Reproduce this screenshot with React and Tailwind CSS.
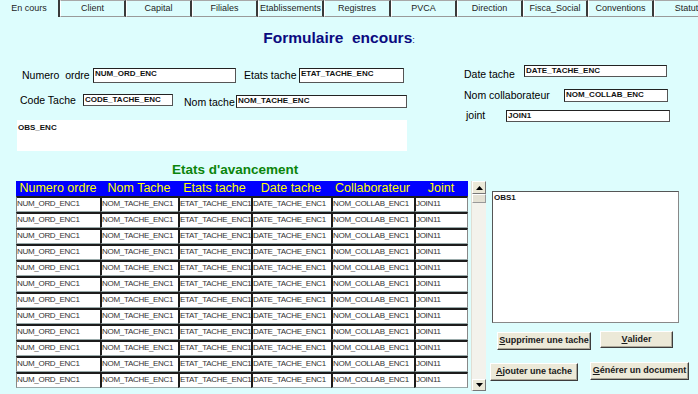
const tabs = [
  { label: 'En cours', w: 'w-[60px]', active: true },
  { label: 'Client', w: 'w-[66px]' },
  { label: 'Capital', w: 'w-[66px]' },
  { label: 'Filiales', w: 'w-[66px]' },
  { label: 'Etablissements', w: 'w-[66px]' },
  { label: 'Registres', w: 'w-[67px]' },
  { label: 'PVCA', w: 'w-[66px]' },
  { label: 'Direction', w: 'w-[66px]' },
  { label: 'Fisca_Social', w: 'w-[65px]' },
  { label: 'Conventions', w: 'w-[66px]' },
  { label: 'Statut', w: 'w-[66px]' },
]

const columns = [
  { title: 'Numero ordre', value: 'NUM_ORD_ENC1', w: 'w-[84px]' },
  { title: 'Nom Tache', value: 'NOM_TACHE_ENC1', w: 'w-[78px]' },
  { title: 'Etats tache', value: 'ETAT_TACHE_ENC1', w: 'w-[73px]' },
  { title: 'Date tache', value: 'DATE_TACHE_ENC1', w: 'w-[80px]' },
  { title: 'Collaborateur', value: 'NOM_COLLAB_ENC1', w: 'w-[83px]' },
  { title: 'Joint', value: 'JOIN11', w: 'w-[54px]' },
]

const rows = Array.from({ length: 12 }, (_, i) => i)

function Field({ value, className }) {
  return (
    <div className={`bg-white border border-t-[#222] border-l-[#222] border-b-[#555] border-r-[#555] pl-[1px] text-[8px] font-bold leading-[10px] text-[#111] overflow-hidden whitespace-nowrap ${className}`}>
      {value}
    </div>
  )
}

function Button({ children, className }) {
  return (
    <div className={`flex items-center justify-center bg-[#ece9d8] border border-t-white border-l-white border-b-[#3c3c3c] border-r-[#3c3c3c] shadow-[inset_-1px_-1px_0_#aca899] text-[9px] font-bold text-[#1a1a1a] whitespace-nowrap ${className}`}>
      {children}
    </div>
  )
}

function Arrow({ down }) {
  return (
    <svg width="7" height="4" viewBox="0 0 7 4">
      <polygon points={down ? '0,0 7,0 3.5,4' : '0,4 7,4 3.5,0'} fill="#000" />
    </svg>
  )
}

export default function App() {
  return (
    <div className="w-[698px] h-[394px] overflow-hidden bg-[#ddfdfd] font-['Liberation_Sans',Arial,sans-serif] text-black">
      {/* tabs */}
      <div className="flex h-[17px] overflow-hidden">
        {tabs.map((t) => (
          <div
            key={t.label}
            className={`${t.w} shrink-0 flex items-center justify-center text-[9px] text-[#1e1e1e] border-r-2 border-r-[#3a3a3a] ${
              t.active ? '' : 'border-t border-t-[#a8a8a8] border-b border-b-[#9a9a9a] border-l border-l-white'
            }`}
          >
            {t.label}
          </div>
        ))}
      </div>

      {/* title */}
      <div className="pt-[11px] pr-[20px] h-[31px] text-center text-[15.5px] leading-[20px] font-bold text-[#0a0a80]">
        Formulaire&nbsp; encours<span className="text-[9px] font-normal">:</span>
      </div>

      {/* form */}
      <div className="flex mt-[16px] h-[88px]">
        <div className="ml-[17px] w-[390px]">
          <div className="flex items-center mt-[4px] h-[15px] text-[10.5px]">
            <span className="ml-[5px] w-[71px]">Numero&nbsp; ordre</span>
            <Field value="NUM_ORD_ENC" className="w-[143px] h-[15px]" />
            <span className="ml-[8px] w-[55px]">Etats tache</span>
            <Field value="ETAT_TACHE_ENC" className="w-[105px] h-[15px]" />
          </div>
          <div className="flex items-start mt-[11px] h-[13px] text-[10.5px]">
            <span className="ml-[3px] w-[63px] leading-[12px]">Code Tache</span>
            <Field value="CODE_TACHE_ENC" className="w-[90px] h-[12px]" />
            <span className="ml-[11px] w-[52px] mt-[2px] leading-[12px]">Nom tache</span>
            <Field value="NOM_TACHE_ENC" className="w-[171px] h-[13px] mt-[1px]" />
          </div>
          <div className="mt-[13px] h-[31px] bg-white pl-[1px] pt-[3px] text-[8px] font-bold leading-[9px] text-[#111]">
            OBS_ENC
          </div>
        </div>
        <div className="ml-[57px] text-[10.5px]">
          <div className="flex items-start mt-[1px] h-[12px]">
            <span className="w-[60px] mt-[3px] leading-[12px]">Date tache</span>
            <Field value="DATE_TACHE_ENC" className="w-[143px] h-[12px]" />
          </div>
          <div className="flex items-center mt-[12px] h-[13px]">
            <span className="w-[100px]">Nom collaborateur</span>
            <Field value="NOM_COLLAB_ENC" className="w-[104px] h-[13px]" />
          </div>
          <div className="flex items-center mt-[8px] h-[12px]">
            <span className="ml-[2px] w-[40px]">joint</span>
            <Field value="JOIN1" className="w-[164px] h-[12px]" />
          </div>
        </div>
      </div>

      {/* table title */}
      <div className="mt-[9px] pl-[172px] h-[18px] text-[13.5px] leading-[18px] font-bold text-[#0b850b]">
        Etats d'avancement
      </div>

      {/* table + side */}
      <div className="flex mt-[2px]">
        <div className="ml-[16px] w-[452px]">
          <div className="flex h-[15px] bg-[#0000ff]">
            {columns.map((c) => (
              <div key={c.title} className={`${c.w} text-center text-[12.5px] leading-[15px] text-[#ffff00] whitespace-nowrap`}>
                {c.title}
              </div>
            ))}
          </div>
          {rows.map((r) => (
            <div key={r} className="flex h-[16px] bg-[#b8c4c4]">
              {columns.map((c, i) => (
                <div
                  key={c.title}
                  className={`${c.w} h-[16px] bg-white border-t-2 border-t-[#1c1c1c] border-b border-b-[#9aa] ${
                    i === 0 ? 'border-l border-l-[#888]' : 'border-l-2 border-l-[#1c1c1c]'
                  } ${i === columns.length - 1 ? 'border-r border-r-[#888]' : ''} text-[8px] tracking-[-0.3px] leading-[11px] text-[#333] whitespace-nowrap overflow-hidden`}
                >
                  {c.value}
                </div>
              ))}
            </div>
          ))}
        </div>

        {/* scrollbar */}
        <div className="ml-[3px] w-[15px] h-[210px] flex flex-col bg-[#f3f2ec] border-l border-l-[#e0ded4]">
          <div className="h-[13px] flex items-center justify-center bg-[#ece9d8] border border-t-white border-l-white border-b-[#777] border-r-[#777]">
            <Arrow />
          </div>
          <div className="h-[9px] bg-[#e4e1d4] border border-t-white border-l-white border-b-[#999] border-r-[#999]" />
          <div className="flex-1" />
          <div className="h-[12px] flex items-center justify-center bg-[#ece9d8] border border-t-white border-l-white border-b-[#777] border-r-[#777]">
            <Arrow down />
          </div>
        </div>

        {/* side panel */}
        <div className="ml-[4px] w-[200px]">
          <div className="ml-[2px] mt-[10px] w-[187px] h-[132px] bg-white border border-t-[#555] border-l-[#555] border-b-[#888] border-r-[#888] pl-[1px] pt-[1px] text-[8px] font-bold leading-[10px] text-[#111]">
            OBS1
          </div>
          <div className="flex items-start mt-[9px]">
            <Button className="ml-[7px] w-[94px] h-[18px]">
              <span className="underline">S</span>upprimer une tache
            </Button>
            <Button className="ml-[9px] -mt-[1px] w-[73px] h-[17px]">
              <span className="underline">V</span>alider
            </Button>
          </div>
          <div className="flex items-start mt-[12px]">
            <Button className="w-[88px] h-[18px] mt-[1px]">
              <span className="underline">A</span>jouter une tache
            </Button>
            <Button className="ml-[12px] w-[99px] h-[18px]">
              <span className="underline">G</span>énérer un document
            </Button>
          </div>
        </div>
      </div>
    </div>
  )
}
